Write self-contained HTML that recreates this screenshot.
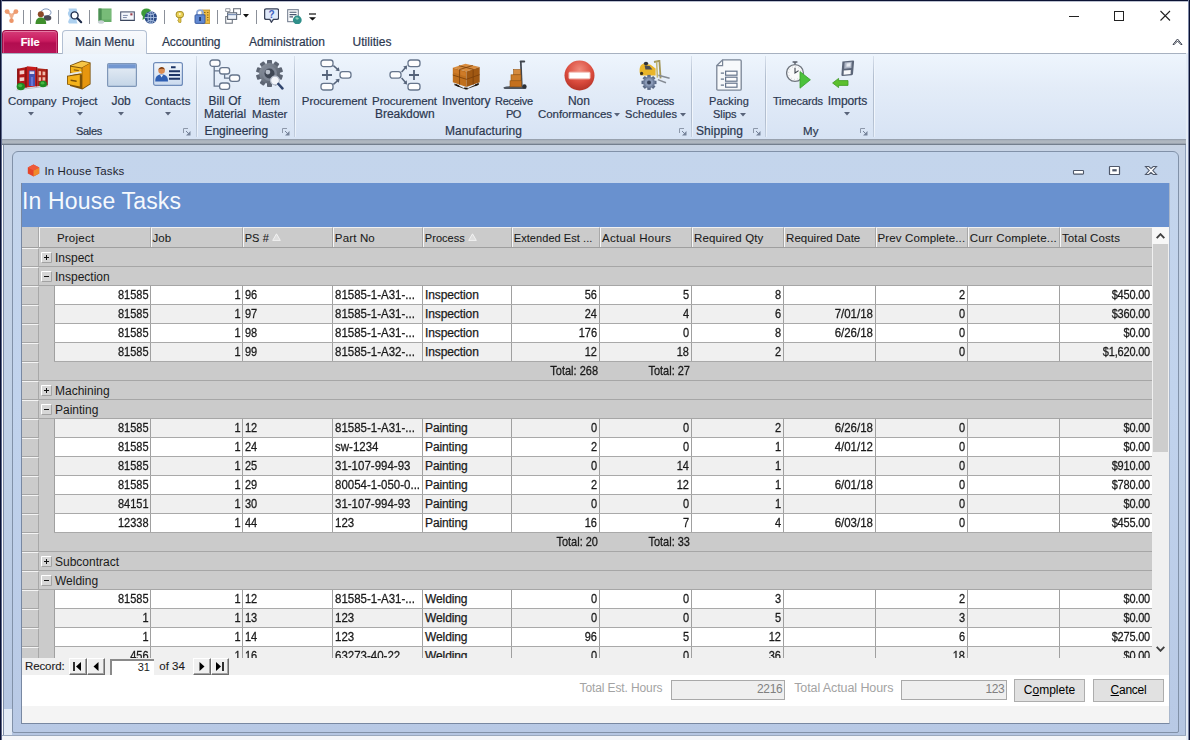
<!DOCTYPE html>
<html><head><meta charset="utf-8"><title>In House Tasks</title>
<style>
*{box-sizing:border-box;margin:0;padding:0}
html,body{width:1190px;height:740px;overflow:hidden;background:#fff}
body{font-family:"Liberation Sans",sans-serif;font-size:11px;color:#1a1a1a;position:relative}
.abs{position:absolute}
.t{position:absolute;white-space:nowrap;line-height:14px;height:14px;-webkit-text-stroke:0.2px}
/* frame */
#topline{left:0;top:0;width:1190px;height:2px;background:linear-gradient(#0b1233 0,#0b1233 1px,#8e96ad 1px,#e8ebf2 2px)}
#leftline{left:0;top:0;width:2px;height:740px;background:linear-gradient(90deg,#0b1233 0,#0b1233 1px,#4b5679 1px,#6f7a9b 2px)}
#rightline{left:1188px;top:0;width:2px;height:740px;background:linear-gradient(90deg,#7d88a6 0,#7d88a6 1px,#0b1233 1px,#0b1233 2px)}
#rightstrip{left:1186px;top:53px;width:2px;height:687px;background:#e6edf6}
#qat{left:2px;top:2px;width:1188px;height:28px;background:#fff}
#tabs{left:2px;top:30px;width:1188px;height:23px;background:#fff}
#ribbon{left:2px;top:53px;width:1184px;height:86px;background:linear-gradient(#eef5fd 0%,#e3ecf8 40%,#d7e3f4 100%);border-top:1px solid #a7b1c0}
#ribbot{left:2px;top:139px;width:1184px;height:6px;background:linear-gradient(#8f99a7 0%,#a9b1bb 25%,#b3bac3 55%,#98a1ad 78%,#5e6a7a 100%)}
#mdi{left:3px;top:145px;width:1183px;height:590px;background:linear-gradient(#c8d3e3 0,#c6d3e6 8px,#c0d1e7 300px,#b5c6e2 590px);border-left:1px solid #7f8ea8;border-right:1px solid #8fa0bb}
#mdibot{left:2px;top:735px;width:1188px;height:5px;background:#f4f6f9;border-top:1px solid #9aa8bd}
#child{left:12px;top:151px;width:1167px;height:582px;background:linear-gradient(#c4d5ec 0,#c1d3ed 250px,#b8c9e5 582px);border:1px solid #8191a8;border-radius:6px 6px 2px 2px}
#content{left:21px;top:183px;width:1149px;height:541px;background:#fff;border:1px solid #7888a2;border-top:none;border-right-color:#a9b7cc}
#lcorner{left:4px;top:709px;width:8px;height:26px;background:#e3ebf6}
#bluehdr{left:22px;top:183px;width:1147px;height:44px;background:#6991cf}
#bluehdr span{position:absolute;left:0px;top:4px;font-size:23px;line-height:28px;color:#f6f9fd;letter-spacing:0.17px}
.sep{position:absolute;top:56px;width:2px;height:81px;background:linear-gradient(90deg,#b3bfd0 0,#b3bfd0 1px,#f1f6fc 1px,#f1f6fc 2px);-webkit-mask-image:linear-gradient(rgba(0,0,0,.35),#000 25%,#000 80%,rgba(0,0,0,.6));mask-image:linear-gradient(rgba(0,0,0,.35),#000 25%,#000 80%,rgba(0,0,0,.6))}
.rl{color:#3a4760}
#filetab{left:2px;top:30px;width:56px;height:23px;border-radius:4px 4px 0 0;background:linear-gradient(#d63c78 0%,#c91b5f 45%,#b30d50 55%,#b81457 100%);border:1px solid #9c0d46;border-bottom:none;box-shadow:inset 0 1px 0 #e57aa3, inset 1px 0 0 #d4457c, inset -1px 0 0 #d4457c}
#maintab{left:62px;top:30px;width:85px;height:24px;border-radius:4px 4px 0 0;background:linear-gradient(#f7f9fc,#edf2f8);border:1px solid #b3c0d3;border-bottom:none}
.navb{position:absolute;top:658px;height:17px;background:#f0f0f0;border-top:1px solid #fff;border-left:1px solid #fff;border-right:1px solid #6e6e6e;border-bottom:1px solid #6e6e6e;box-shadow:inset -1px -1px 0 #a5a5a5}
.navb svg{position:absolute;left:0;top:0}
.fld{position:absolute;top:680px;height:19.5px;background:#efefef;border:1px solid #a9a9a9;text-align:right;padding-right:1.5px;line-height:17.5px;font-size:12px;letter-spacing:-0.3px;color:#808080}
.btn{position:absolute;top:679px;height:23px;background:#e1e1e1;border:1px solid #adadad;text-align:center;line-height:20px;font-size:12px;color:#000}
/* grid */
.grid{position:absolute;left:22px;top:227px;width:1130px;height:431px;background:#cbcbcb;overflow:hidden}
.hrow{position:absolute;left:0;top:0;width:1130px;height:21px;background:#cbcbcb;border-bottom:1px solid #9f9f9f}
.hsel{position:absolute;left:0;top:0;width:17px;height:21px;border-right:1px solid #a8a8a8}
.hc{position:absolute;top:0;height:20px;border-left:1px solid #a8a8a8;border-top:1px solid #f0f0f0;box-shadow:inset 1px 0 0 #f6f6f6}
.hc.first{border-left:none}
.grow,.trow,.drow{position:absolute;left:0;width:1130px;height:19px}
.grow,.trow{border-bottom:1px solid #a6a6a6}
.sel{position:absolute;left:0;top:0;width:17px;height:19px;background:#cbcbcb;border-top:1px solid #f4f4f4;border-right:1px solid #a8a8a8;border-bottom:1px solid #a6a6a6}
.pm{position:absolute;left:19px;top:4px}
.gl{position:absolute;left:33px;top:0.5px;line-height:18px;font-size:12px}
.tt{position:absolute;top:0;line-height:18px}
.cells{position:absolute;left:32px;top:0;width:1098px;height:19px;background:linear-gradient(#a0a0a0,#a0a0a0) 0px 0/1px 100% no-repeat,linear-gradient(#a0a0a0,#a0a0a0) 96px 0/1px 100% no-repeat,linear-gradient(#a0a0a0,#a0a0a0) 188px 0/1px 100% no-repeat,linear-gradient(#a0a0a0,#a0a0a0) 278px 0/1px 100% no-repeat,linear-gradient(#a0a0a0,#a0a0a0) 368px 0/1px 100% no-repeat,linear-gradient(#a0a0a0,#a0a0a0) 457px 0/1px 100% no-repeat,linear-gradient(#a0a0a0,#a0a0a0) 545px 0/1px 100% no-repeat,linear-gradient(#a0a0a0,#a0a0a0) 637px 0/1px 100% no-repeat,linear-gradient(#a0a0a0,#a0a0a0) 729px 0/1px 100% no-repeat,linear-gradient(#a0a0a0,#a0a0a0) 821px 0/1px 100% no-repeat,linear-gradient(#a0a0a0,#a0a0a0) 913px 0/1px 100% no-repeat,linear-gradient(#a0a0a0,#a0a0a0) 1005px 0/1px 100% no-repeat;background-color:#fff;border-bottom:1px solid #a9a9a9}
.alt .cells{background-color:#f0f0f0}
.c{position:absolute;top:0;height:18px;line-height:18px;padding:0 2px 0 3px;white-space:nowrap;overflow:hidden;transform-origin:0 12.6px;-webkit-text-stroke:0.25px #1a1a1a}
.c.r{text-align:right}
.tt{transform:scaleY(1.1);transform-origin:0 12.6px;-webkit-text-stroke:0.25px #1a1a1a}
</style></head><body>
<div class="abs" id="qat"></div>
<div class="abs" id="tabs"></div>
<div class="abs" id="ribbon"></div>
<div class="abs" id="ribbot"></div>
<div class="abs" id="mdi"></div>
<div class="abs" id="mdibot"></div>
<div class="abs" id="lcorner"></div>
<div class="abs" id="child"></div>
<div class="abs" id="content"></div>
<div class="abs" id="bluehdr"><span>In House Tasks</span></div>
<svg class="abs" style="left:3.5px;top:8px" width="15" height="16" viewBox="0 0 16 16"><path d="M3.5 3.5 L8 7.5 L12.5 3.5 M8 7.5 V12.5" stroke="#e9a37e" stroke-width="2" fill="none"/><circle cx="3.3" cy="3.3" r="2.6" fill="#ee9a6e"/><circle cx="12.7" cy="3.3" r="2.6" fill="#ee9a6e"/><circle cx="8" cy="7.6" r="2.3" fill="#f2b08c"/><circle cx="8" cy="13" r="2.4" fill="#ec9468"/></svg>
<div class="abs" style="left:23px;top:9.5px;width:1px;height:14px;background:#8b9099"></div>
<div class="abs" style="left:30px;top:9.5px;width:1px;height:14px;background:#8b9099"></div>
<svg class="abs" style="left:35px;top:8px" width="17" height="16" viewBox="0 0 17 16"><ellipse cx="11" cy="4.5" rx="5" ry="3.6" fill="#fff" stroke="#7e97bd" stroke-width="1"/><ellipse cx="12.5" cy="10" rx="3.8" ry="2.8" fill="#4a4a55"/><circle cx="5.8" cy="6.2" r="3" fill="#8c4a28"/><path d="M0.5 16 C0.5 11 3 9.5 5.8 9.5 C8.8 9.5 11.2 11 11.2 16 Z" fill="#3f8f2c"/></svg>
<div class="abs" style="left:58px;top:9.5px;width:1px;height:14px;background:#8b9099"></div>
<svg class="abs" style="left:67px;top:8px" width="15.5" height="16" viewBox="0 0 15.5 16"><path d="M1.5 0.5 H9.5 Q11 2.5 9 4.5 Q7.5 6.5 10 8.5 Q11.5 10.5 9.5 12.5 L10.5 15.5 H2 Q0.5 13.5 2 11.5 Q3.5 9.5 1.5 7.5 Q0 5 2 3 Z" fill="#a9cdee" opacity="0.95"/><circle cx="7.6" cy="7.4" r="3.5" fill="#fdfeff" stroke="#1d2b4a" stroke-width="1.4"/><path d="M10.4 10.2 L14.2 14.2" stroke="#1d2b4a" stroke-width="2.1" stroke-linecap="round"/></svg>
<div class="abs" style="left:89px;top:9.5px;width:1px;height:14px;background:#8b9099"></div>
<svg class="abs" style="left:97px;top:8px" width="16" height="16" viewBox="0 0 16 16"><rect x="1.5" y="0.5" width="13" height="13.5" fill="#66ad68"/><rect x="1.5" y="0.5" width="3" height="13.5" fill="#4d8f55"/><rect x="5" y="1.5" width="9" height="10" fill="#78bb78"/><ellipse cx="4" cy="14" rx="3.2" ry="1.8" fill="#c9d2d6"/></svg>
<svg class="abs" style="left:120px;top:8px" width="15" height="16" viewBox="0 0 15.4 16"><rect x="0.7" y="3.8" width="14" height="8.6" fill="#f4f7fc" stroke="#4a5470" stroke-width="1.1"/><path d="M0.3 12.6 H15.1" stroke="#39435a" stroke-width="1"/><rect x="10.6" y="5.2" width="2.2" height="2.2" fill="#9a3d4a"/><path d="M3 7.4 H8 M3 9.6 H7" stroke="#7a88a8" stroke-width="1"/></svg>
<svg class="abs" style="left:140.5px;top:7.5px" width="16.5" height="16.5" viewBox="0 0 16.5 16.5"><ellipse cx="5.5" cy="5" rx="5.3" ry="4.6" fill="#3d9a3a"/><path d="M2 8 L1.5 12 L6 9 Z" fill="#3d9a3a"/><circle cx="9.8" cy="9.5" r="6.2" fill="#2b4a86"/><path d="M9.8 3.3 V15.7 M3.6 9.5 H16 M5.5 5.2 C8 7 11.6 7 14.2 5.2 M5.5 13.8 C8 12 11.6 12 14.2 13.8" stroke="#a9bfe2" stroke-width="0.9" fill="none"/><ellipse cx="9.8" cy="9.5" rx="2.8" ry="6.2" fill="none" stroke="#a9bfe2" stroke-width="0.9"/></svg>
<div class="abs" style="left:164px;top:9.5px;width:1px;height:14px;background:#8b9099"></div>
<svg class="abs" style="left:174.5px;top:10.5px" width="9.6" height="12.6" viewBox="0 0 9.6 12.6"><rect x="1.2" y="0.6" width="7.2" height="6" rx="2.4" fill="#ecd35a" stroke="#a28a1e" stroke-width="1"/><circle cx="4.8" cy="3" r="1" fill="#fffbe0"/><path d="M3.6 6.4 H6 V11.2 L4.8 12.2 L3.6 11.2 V10 L2.6 9.4 L3.6 8.8 Z" fill="#e6c84a" stroke="#a28a1e" stroke-width="0.7"/></svg>
<svg class="abs" style="left:193.5px;top:7.5px" width="16.5" height="16" viewBox="0 0 16.5 16"><rect x="8" y="2" width="8" height="13.5" fill="#edbb45" stroke="#b98a22" stroke-width="0.8"/><path d="M10 4.5 H11.5 M13 4.5 H14.5 M10 7 H11.5 M13 7 H14.5 M13 9.5 H14.5 M13 12 H14.5" stroke="#8d6a18" stroke-width="1.2"/><path d="M3 7 V4.5 C3 1.2 9 1.2 9 4.5 V7" fill="none" stroke="#8fa9d8" stroke-width="1.8"/><rect x="1" y="6.8" width="10" height="8.6" rx="1" fill="#6189d2" stroke="#36579c" stroke-width="0.9"/><rect x="5.2" y="9" width="1.7" height="4" fill="#1f3566"/></svg>
<div class="abs" style="left:217px;top:9.5px;width:1px;height:14px;background:#8b9099"></div>
<svg class="abs" style="left:225px;top:8px" width="16" height="16" viewBox="0 0 16 16"><rect x="8.6" y="0.7" width="7" height="5.8" fill="#fff" stroke="#707782" stroke-width="1.1"/><rect x="0.7" y="8.6" width="6.6" height="6.6" fill="#fff" stroke="#707782" stroke-width="1.1"/><rect x="2.6" y="4.8" width="9" height="6.6" fill="#eef3fa" stroke="#5f6876" stroke-width="1.1"/><path d="M2.6 6.6 H11.6" stroke="#7d93b8" stroke-width="1.2"/><path d="M0.7 3.5 H5 V0.7 H0.7 Z" fill="#fff" stroke="#8a909a" stroke-width="0.9"/></svg>
<svg class="abs" style="left:243px;top:14px" width="6" height="4" viewBox="0 0 6 4"><path d="M0 0 H6 L3 3.6 Z" fill="#111"/></svg>
<div class="abs" style="left:256px;top:9.5px;width:1px;height:14px;background:#8b9099"></div>
<svg class="abs" style="left:264px;top:8px" width="15" height="15" viewBox="0 0 15 15"><path d="M2.2 0.8 H13 Q14.6 0.8 14.6 2.4 V9.8 Q14.6 11.4 13 11.4 H9.4 L7.4 14.2 L5.8 11.4 H2.2 Q0.6 11.4 0.6 9.8 V2.4 Q0.6 0.8 2.2 0.8 Z" fill="#dfe9fa" stroke="#3a4258" stroke-width="1.3"/><text x="7.6" y="9.6" font-family="Liberation Sans,sans-serif" font-size="10" font-weight="bold" fill="#3d5fc0" text-anchor="middle">?</text></svg>
<svg class="abs" style="left:287px;top:8.5px" width="15" height="15.5" viewBox="0 0 15 15.5"><rect x="0.7" y="0.7" width="10.6" height="12" fill="#fbfcfd" stroke="#6a7688" stroke-width="1"/><path d="M2.5 3.3 H9.5 M2.5 5.6 H9.5 M2.5 7.9 H6" stroke="#47566e" stroke-width="1.1"/><circle cx="10.3" cy="11" r="4.4" fill="#2f8f8a"/><path d="M8 9 Q10 7.5 12 9.5 Q11 11 9.5 10.5 Z" fill="#8fd0b8"/></svg>
<svg class="abs" style="left:307.5px;top:12.5px" width="9" height="9" viewBox="0 0 9 9"><path d="M1 1 H8" stroke="#111" stroke-width="1.2"/><path d="M1 4.2 H8 L4.5 7.6 Z" fill="#111"/></svg>
<svg class="abs" style="left:1060px;top:4px" width="120" height="24" viewBox="0 0 120 24"><path d="M9 12.5 H19" stroke="#222" stroke-width="1"/><rect x="54.5" y="7.5" width="9" height="9" fill="none" stroke="#222" stroke-width="1"/><path d="M100.5 7 L110 16.5 M110 7 L100.5 16.5" stroke="#222" stroke-width="1.1"/></svg>
<div class="abs" id="filetab"></div><div class="abs" id="maintab"></div>
<div class="t" style="left:20.7px;top:34.8px;font-size:11px;color:#fff;font-weight:bold;letter-spacing:-0.04px;">File</div>
<div class="t" style="left:75.0px;top:34.9px;font-size:12px;color:#2c3850;">Main Menu</div>
<div class="t" style="left:161.9px;top:34.9px;font-size:12px;color:#2c3850;letter-spacing:-0.08px;">Accounting</div>
<div class="t" style="left:248.9px;top:34.9px;font-size:12px;color:#2c3850;">Administration</div>
<div class="t" style="left:352.5px;top:34.9px;font-size:12px;color:#2c3850;letter-spacing:0.04px;">Utilities</div>
<svg class="abs" style="left:1172px;top:37px" width="11" height="9" viewBox="0 0 11 9"><path d="M1 7.5 L5.5 2 L10 7.5 Q8.5 8 7.5 6.2 L5.5 4 L3.5 6.2 Q2.5 8 1 7.5 Z" fill="#fff" stroke="#3c4250" stroke-width="1"/></svg>
<div class="t" style="left:8.0px;top:93.5px;font-size:11.5px;color:#2c3850;letter-spacing:-0.1px;">Company</div>
<div class="t" style="left:62.0px;top:93.5px;font-size:11.5px;color:#2c3850;letter-spacing:-0.04px;">Project</div>
<div class="t" style="left:111.5px;top:93.5px;font-size:12px;color:#2c3850;letter-spacing:-0.12px;">Job</div>
<div class="t" style="left:145.0px;top:93.5px;font-size:11.5px;color:#2c3850;">Contacts</div>
<div class="t" style="left:208.5px;top:93.5px;font-size:12px;color:#2c3850;letter-spacing:0.06px;">Bill Of</div>
<div class="t" style="left:204.0px;top:106.5px;font-size:12px;color:#2c3850;letter-spacing:-0.09px;">Material</div>
<div class="t" style="left:258.2px;top:93.5px;font-size:11px;color:#2c3850;letter-spacing:0.1px;">Item</div>
<div class="t" style="left:252.0px;top:106.5px;font-size:11.5px;color:#2c3850;letter-spacing:0.06px;">Master</div>
<div class="t" style="left:301.8px;top:93.5px;font-size:11.5px;color:#2c3850;letter-spacing:-0.06px;">Procurement</div>
<div class="t" style="left:372.1px;top:93.5px;font-size:11.5px;color:#2c3850;letter-spacing:-0.09px;">Procurement</div>
<div class="t" style="left:375.1px;top:106.5px;font-size:12px;color:#2c3850;letter-spacing:-0.07px;">Breakdown</div>
<div class="t" style="left:441.9px;top:93.5px;font-size:12px;color:#2c3850;letter-spacing:-0.09px;">Inventory</div>
<div class="t" style="left:495.1px;top:93.5px;font-size:11px;color:#2c3850;letter-spacing:-0.29px;">Receive</div>
<div class="t" style="left:506.0px;top:106.5px;font-size:11px;color:#2c3850;letter-spacing:-0.7px;">PO</div>
<div class="t" style="left:567.9px;top:93.5px;font-size:12px;color:#2c3850;letter-spacing:0.06px;">Non</div>
<div class="t" style="left:538.0px;top:106.5px;font-size:11.5px;color:#2c3850;letter-spacing:-0.07px;">Conformances</div>
<div class="t" style="left:636.2px;top:93.5px;font-size:11px;color:#2c3850;letter-spacing:-0.28px;">Process</div>
<div class="t" style="left:625.0px;top:106.5px;font-size:11px;color:#2c3850;letter-spacing:0.07px;">Schedules</div>
<div class="t" style="left:709.0px;top:93.5px;font-size:11px;color:#2c3850;letter-spacing:0.12px;">Packing</div>
<div class="t" style="left:713.0px;top:106.5px;font-size:11px;color:#2c3850;letter-spacing:-0.07px;">Slips</div>
<div class="t" style="left:772.9px;top:93.5px;font-size:11px;color:#2c3850;letter-spacing:-0.09px;">Timecards</div>
<div class="t" style="left:827.8px;top:93.5px;font-size:12px;color:#2c3850;letter-spacing:-0.1px;">Imports</div>
<div class="t" style="left:76.0px;top:123.5px;font-size:11px;color:#2c3850;letter-spacing:-0.31px;">Sales</div>
<div class="t" style="left:204.5px;top:123.5px;font-size:12px;color:#2c3850;letter-spacing:-0.04px;">Engineering</div>
<div class="t" style="left:445.0px;top:123.5px;font-size:12px;color:#2c3850;letter-spacing:0.07px;">Manufacturing</div>
<div class="t" style="left:696.0px;top:123.5px;font-size:12px;color:#2c3850;letter-spacing:0.04px;">Shipping</div>
<div class="t" style="left:803.1px;top:123.5px;font-size:11.5px;color:#2c3850;letter-spacing:0.03px;">My</div>
<div class="sep" style="left:195.5px"></div>
<div class="sep" style="left:293.5px"></div>
<div class="sep" style="left:690.5px"></div>
<div class="sep" style="left:764.5px"></div>
<div class="sep" style="left:872.5px"></div>
<svg class="abs" style="left:16px;top:65.5px" width="32.5" height="25" viewBox="0 0 32 25"><path d="M0.3 23.5 L31.5 19.5 V20.6 L0.3 24.6 Z" fill="#b9bcc0"/>
<path d="M1 2.8 L10.5 1 V21.5 L1 22.6 Z" fill="#b41616"/><path d="M10.5 0.2 L21 1.2 V20.3 L10.5 21.5 Z" fill="#c81c1c"/><path d="M21 2.2 L31.3 3.2 V19.2 L21 20.3 Z" fill="#ac2418"/>
<path d="M1 2.8 L2.2 2.6 V22.4 L1 22.6 Z M9.2 1.2 L10.5 1 V21.5 L9.2 21.7 Z M20 1.1 L21 1.2 V20.3 L20 20.4 Z M30.2 3.1 L31.3 3.2 V19.2 L30.2 19.3 Z" fill="#7e0e0e"/>
<path d="M3.4 4.8 L8 4.2 V8 L3.4 8.5 Z M3.4 11.5 L8 11.2 V14.8 L3.4 15.2 Z" fill="#f1cfcb"/>
<path d="M12.6 4.5 H18.8 V20 H12.6 Z" fill="#4452b0"/><path d="M13.4 5.4 H18 V8 H13.4 Z" fill="#ded8ee"/><path d="M14.6 11 H16.9 V20 H14.6 Z" fill="#6876d6"/>
<path d="M22.4 5 L24.8 5.2 V9.2 L22.4 9.2 Z M26.3 5.4 L29 5.7 V9.2 H26.3 Z M22.4 11.2 H24.8 V14.8 L22.4 15 Z M26.3 11.2 H29 V14.5 L26.3 14.7 Z" fill="#efb9a8"/>
<ellipse cx="4.6" cy="20.5" rx="4.2" ry="3.7" fill="#1f8a22"/><ellipse cx="4" cy="19.6" rx="2.1" ry="1.6" fill="#46b843"/>
<ellipse cx="26.8" cy="18" rx="3.8" ry="3.2" fill="#1f8a22"/><ellipse cx="26.3" cy="17.2" rx="1.8" ry="1.4" fill="#46b843"/></svg>
<svg class="abs" style="left:66px;top:60px" width="26" height="30" viewBox="0 0 26 30"><path d="M4 5.2 L16 0.6 L24.6 2.4 V24.2 L16.4 29.6 L4 26 Z" fill="#7e5209"/>
<path d="M4.8 5.8 L16 1.5 L23.8 3 L15.8 7.4 Z" fill="#f7c545"/>
<path d="M16.4 7.8 L23.8 3.6 V23.8 L16.4 28.6 Z" fill="#e7960f"/>
<path d="M4.8 6.8 L15.6 8.6 V14.4 L4.8 12.4 Z" fill="#f5b51d"/>
<path d="M7.8 9.2 L12.8 10.1 V11.3 L7.8 10.4 Z" fill="#8a5a08"/>
<path d="M2.6 13.4 L15 11.2 L15.8 13 L3.6 15.4 Z" fill="#e4e6e4"/>
<path d="M1 15.8 L14.6 13.6 V27.6 L1 24.6 Z" fill="#7e5209"/>
<path d="M1.8 16.6 L13.8 14.8 V26.6 L1.8 23.9 Z" fill="#f4b21a"/>
<path d="M4.6 19.6 L10.6 20.6 V22 L4.6 21 Z" fill="#7a4f06"/></svg>
<svg class="abs" style="left:107px;top:63px" width="30" height="24" viewBox="0 0 30 24"><defs><linearGradient id="jb" x1="0" y1="0" x2="0" y2="1"><stop offset="0" stop-color="#e7eef6"/><stop offset="1" stop-color="#c4d5e7"/></linearGradient></defs>
<rect x="0.6" y="0.6" width="28.8" height="22.8" rx="1.2" fill="url(#jb)" stroke="#7f97b8" stroke-width="1.2"/><rect x="1.2" y="1.2" width="27.6" height="4.2" fill="#7397d0"/></svg>
<svg class="abs" style="left:153px;top:62px" width="30" height="24" viewBox="0 0 30 24"><defs><linearGradient id="ct" x1="0" y1="0" x2="0" y2="1"><stop offset="0" stop-color="#f3f7fc"/><stop offset="1" stop-color="#c9d9ee"/></linearGradient></defs>
<rect x="0.6" y="0.6" width="28.8" height="22.8" rx="2" fill="url(#ct)" stroke="#6f8cba" stroke-width="1.2"/>
<circle cx="8.6" cy="8.6" r="3.3" fill="#d98b52"/><path d="M5.2 7.6 Q8.6 2.6 12 7.4 Q9 5.8 5.2 7.6 Z" fill="#7a3d12"/>
<path d="M2.2 19.4 C2.2 14.2 5 12.6 8.6 12.6 C12.2 12.6 15 14.2 15 19.4 Z" fill="#2f5fb3"/><path d="M7 12.8 L8.6 15.6 L10.2 12.8 Z" fill="#e8eef8"/>
<path d="M18 5.2 H22.6 M16 9.2 H27 M16 13 H27 M16 16.8 H27" stroke="#1d3566" stroke-width="2"/></svg>
<svg class="abs" style="left:208.5px;top:59px" width="32" height="32" viewBox="0 0 32 32"><g fill="#fdfdfe" stroke="#66758c" stroke-width="1.3"><rect x="1" y="1" width="10" height="6.4" rx="2.6"/><rect x="10.6" y="8.6" width="10" height="6.4" rx="2.6"/><rect x="20.6" y="16" width="10" height="6.4" rx="2.6"/><rect x="10.6" y="24" width="10" height="6.4" rx="2.6"/></g>
<path d="M5.2 7.6 V27.2 H10.4 M5.2 11.8 H10.4 M15.6 15.2 V19.2 H20.4" fill="none" stroke="#66758c" stroke-width="1.3"/></svg>
<svg class="abs" style="left:256px;top:60px" width="28" height="30" viewBox="0 0 28 30"><defs><linearGradient id="gg" x1="0" y1="0" x2="1" y2="1"><stop offset="0" stop-color="#8f97a3"/><stop offset="1" stop-color="#4d5562"/></linearGradient></defs><g transform="translate(13.5,13.5)"><g fill="#5d6573">
<rect x="-2.5" y="-13.5" width="5" height="27" rx="0.8"/><rect x="-2.5" y="-13.5" width="5" height="27" rx="0.8" transform="rotate(36)"/><rect x="-2.5" y="-13.5" width="5" height="27" rx="0.8" transform="rotate(72)"/><rect x="-2.5" y="-13.5" width="5" height="27" rx="0.8" transform="rotate(108)"/><rect x="-2.5" y="-13.5" width="5" height="27" rx="0.8" transform="rotate(144)"/></g>
<circle r="10.4" fill="url(#gg)"/><circle r="7.4" fill="#7d8593"/><circle r="5" fill="#3f4754"/><circle cx="-1.6" cy="-1.4" r="2.4" fill="#b9c0cb"/></g>
<circle cx="19" cy="20.5" r="4.4" fill="#f4f6fa" stroke="#b3bbc8" stroke-width="1.2"/><path d="M22.4 24 L26.4 28.4" stroke="#31456e" stroke-width="2.6" stroke-linecap="round"/></svg>
<svg class="abs" style="left:319.5px;top:59px" width="32" height="32" viewBox="0 0 32 32"><g fill="#fdfdfe" stroke="#66758c" stroke-width="1.3"><rect x="1" y="1" width="12" height="6.6" rx="2.6"/><rect x="1" y="24.4" width="12" height="6.6" rx="2.6"/><rect x="20" y="12.6" width="11" height="6.6" rx="2.6"/></g>
<path d="M7 11 V21 M2 16 H12" stroke="#55637a" stroke-width="1.8"/>
<path d="M13.4 6.6 L18.4 11" stroke="#55637a" stroke-width="1.5"/><path d="M19.6 12.2 L15.4 11.6 L18.8 8.2 Z" fill="#55637a"/>
<path d="M13.4 25.4 L18.4 21" stroke="#55637a" stroke-width="1.5"/><path d="M19.6 19.8 L15.4 20.4 L18.8 23.8 Z" fill="#55637a"/></svg>
<svg class="abs" style="left:388.5px;top:59px" width="32" height="32" viewBox="0 0 32 32"><g fill="#fdfdfe" stroke="#66758c" stroke-width="1.3"><rect x="19" y="1" width="12" height="6.6" rx="2.6"/><rect x="19" y="24.4" width="12" height="6.6" rx="2.6"/><rect x="1" y="12.6" width="11" height="6.6" rx="2.6"/></g>
<path d="M25 11 V21 M20 16 H30" stroke="#55637a" stroke-width="1.8"/>
<path d="M12.6 13 L16.6 8.4" stroke="#55637a" stroke-width="1.5"/><path d="M18 6.6 L17.8 10.8 L14.2 7.6 Z" fill="#55637a"/>
<path d="M12.6 19 L16.6 23.6" stroke="#55637a" stroke-width="1.5"/><path d="M18 25.4 L17.8 21.2 L14.2 24.4 Z" fill="#55637a"/></svg>
<svg class="abs" style="left:451.5px;top:62px" width="28.5" height="27.5" viewBox="0 0 28 27"><path d="M2.4 21 L13.6 26.8 L26.4 20.6 V22.4 L13.6 27 L2.4 22.8 Z" fill="#2e2216"/><path d="M4 21.6 L7 23 V24.6 L4 23.4 Z M12 25 L15.4 25.2 V27 L12 26.6 Z M22.6 22 L25.6 20.8 V22.6 L22.6 23.8 Z" fill="#1e160e"/>
<path d="M0.8 5.6 L13.2 1.6 L27.2 5 L14.2 9.4 Z" fill="#d88c3e"/>
<path d="M0.8 5.6 L14.2 9.4 V24.6 L0.8 20 Z" fill="#c0701e"/>
<path d="M14.2 9.4 L27.2 5 V19.8 L14.2 24.6 Z" fill="#a05812"/>
<path d="M7.4 7.4 V22.4 M0.8 12.8 L14.2 17 L27.2 12.4 M20.8 7.2 V22.2 M6.8 3.6 L20.8 7.2 M20.4 3.4 L7.4 7.4" stroke="#7a3f0a" stroke-width="0.8" fill="none"/>
<path d="M1.4 6.6 L6.8 8.2 V12 L1.4 10.4 Z M8.2 8.6 L13.6 10.2 V14.2 L8.2 12.6 Z" fill="#d8822e" opacity="0.6"/></svg>
<svg class="abs" style="left:502.5px;top:60px" width="24" height="30" viewBox="0 0 24 30"><path d="M17.8 1.4 L18.8 26.6" stroke="#41464e" stroke-width="1.7"/><path d="M17.6 1.4 H21.2" stroke="#41464e" stroke-width="2" stroke-linecap="round"/>
<path d="M0.6 27.2 Q6 25.4 20 26.6 L23.4 27.6 Q23.6 29.4 21 29 H2.4 Q0.2 28.8 0.6 27.2 Z" fill="#4f5660"/>
<circle cx="21.4" cy="26.4" r="2.2" fill="#2c3036"/>
<rect x="10.6" y="9.6" width="7" height="5.2" fill="#d48a3e" stroke="#95540f" stroke-width="0.6"/>
<rect x="8" y="14.8" width="10" height="6" fill="#cc7c2a" stroke="#95540f" stroke-width="0.6"/>
<rect x="7" y="20.8" width="11.4" height="6" fill="#c4701e" stroke="#95540f" stroke-width="0.6"/></svg>
<svg class="abs" style="left:563.5px;top:59.5px" width="31" height="31" viewBox="0 0 31 31"><defs><radialGradient id="nc" cx="0.5" cy="0.3" r="0.8"><stop offset="0" stop-color="#f08a7c"/><stop offset="0.55" stop-color="#d94a3c"/><stop offset="1" stop-color="#a62a20"/></radialGradient></defs>
<circle cx="15.5" cy="15.5" r="15" fill="url(#nc)"/><rect x="5" y="12.2" width="21" height="6.6" rx="0.8" fill="#fff" stroke="#f3c2bc" stroke-width="1"/></svg>
<svg class="abs" style="left:639px;top:60px" width="31" height="30" viewBox="0 0 31 30"><path d="M15 2 L20.4 0.8 L21.6 18.4" stroke="#a3975a" stroke-width="1.8" fill="none"/><path d="M17.6 1.6 L18.4 17.6" stroke="#c2b56e" stroke-width="1.5"/>
<path d="M0.6 9 Q1 4.6 5 3.6 L11.6 4.8 L16.6 8.6 V15.4 H1.4 Q0.2 12 0.6 9 Z" fill="#e9b52a"/><path d="M5.6 5.4 L10.6 6 L13.4 9.4 H6.4 Z" fill="#4a4d55"/><ellipse cx="7" cy="3.6" rx="2.2" ry="1.8" fill="#2f3238"/><circle cx="2.6" cy="13.4" r="1.6" fill="#3a3320"/>
<path d="M19.4 15.2 L30.6 18.2 M18.8 19.6 L27 22.8" stroke="#858b94" stroke-width="1.5"/>
<g transform="translate(10,22.4)"><g fill="#596985"><rect x="-1.7" y="-7.5" width="3.4" height="15"/><rect x="-1.7" y="-7.5" width="3.4" height="15" transform="rotate(45)"/><rect x="-1.7" y="-7.5" width="3.4" height="15" transform="rotate(90)"/><rect x="-1.7" y="-7.5" width="3.4" height="15" transform="rotate(135)"/></g><circle r="5.9" fill="#6f7f9c"/><circle r="4.2" fill="#8999b6"/><circle r="2" fill="#36425a"/></g></svg>
<svg class="abs" style="left:716px;top:59px" width="26" height="32" viewBox="0 0 26 32"><path d="M6.6 0.8 H24 Q25.2 0.8 25.2 2 V30 Q25.2 31.2 24 31.2 H2 Q0.8 31.2 0.8 30 V6.6 Z" fill="#f7f9fb" stroke="#7a8596" stroke-width="1.3"/><path d="M6.6 0.8 V6.6 H0.8" fill="none" stroke="#7a8596" stroke-width="1.2"/>
<g fill="#fdfdfe" stroke="#66758c" stroke-width="1.2"><rect x="9.6" y="12.2" width="11.4" height="4"/><rect x="9.6" y="18.2" width="11.4" height="4"/><rect x="9.6" y="24.2" width="11.4" height="4"/></g>
<path d="M4.8 14.2 H8 M4.8 20.2 H8 M4.8 26.2 H8" stroke="#66758c" stroke-width="1.2"/></svg>
<svg class="abs" style="left:785.5px;top:61px" width="25" height="28" viewBox="0 0 25 28"><path d="M6.6 1 H11.4 M9 1 V3.4" stroke="#555b66" stroke-width="1.4"/><circle cx="9" cy="12" r="8.4" fill="#f8f9fa" stroke="#70767f" stroke-width="1.3"/><circle cx="9" cy="12" r="6.4" fill="none" stroke="#b9bec6" stroke-width="0.8" stroke-dasharray="0.9 2.4"/><path d="M9 6.8 V12 L12.6 9.6" stroke="#3c424c" stroke-width="1.1" fill="none"/>
<path d="M14 10.6 L24.4 18.8 L14 27.2 Z" fill="#4cc23c" stroke="#3aa02c" stroke-width="0.8"/></svg>
<svg class="abs" style="left:832px;top:60px" width="23" height="28" viewBox="0 0 23 28"><path d="M10.4 1.6 L21 0.4 Q22.2 0.3 22.1 1.5 L21 14 Q20.9 15.1 19.7 15.2 L10.6 16 Q9.3 16.1 9.4 14.8 Z" fill="#5c6679"/><path d="M12.6 2.6 L19.8 1.8 L19.4 8 L12.2 8.8 Z" fill="#aeb6c6"/><path d="M14.6 3.4 L18.6 3 L18.4 6.4 L14.4 6.8 Z" fill="#e6eaf1"/><path d="M11.8 10.6 L18.8 9.9 L18.6 14 L11.6 14.7 Z" fill="#f8f9fb"/>
<path d="M0.6 23 L6.6 18.4 V20.6 H16 V25.4 H6.6 V27.6 Z" fill="#5cc02e" stroke="#3f9a22" stroke-width="0.8" stroke-linejoin="round"/></svg>
<svg class="abs" style="left:28px;top:112px" width="6" height="4" viewBox="0 0 6 4"><path d="M0 0 H6 L3 3.4 Z" fill="#59647a"/></svg>
<svg class="abs" style="left:76.5px;top:112px" width="6" height="4" viewBox="0 0 6 4"><path d="M0 0 H6 L3 3.4 Z" fill="#59647a"/></svg>
<svg class="abs" style="left:118px;top:112px" width="6" height="4" viewBox="0 0 6 4"><path d="M0 0 H6 L3 3.4 Z" fill="#59647a"/></svg>
<svg class="abs" style="left:164.5px;top:112px" width="6" height="4" viewBox="0 0 6 4"><path d="M0 0 H6 L3 3.4 Z" fill="#59647a"/></svg>
<svg class="abs" style="left:614px;top:113px" width="6" height="4" viewBox="0 0 6 4"><path d="M0 0 H6 L3 3.4 Z" fill="#59647a"/></svg>
<svg class="abs" style="left:680px;top:113px" width="6" height="4" viewBox="0 0 6 4"><path d="M0 0 H6 L3 3.4 Z" fill="#59647a"/></svg>
<svg class="abs" style="left:740px;top:113px" width="6" height="4" viewBox="0 0 6 4"><path d="M0 0 H6 L3 3.4 Z" fill="#59647a"/></svg>
<svg class="abs" style="left:844px;top:112px" width="6" height="4" viewBox="0 0 6 4"><path d="M0 0 H6 L3 3.4 Z" fill="#59647a"/></svg>
<svg class="abs" style="left:183px;top:128px" width="8" height="8" viewBox="0 0 8 8"><path d="M0.5 5 V0.5 H5" fill="none" stroke="#8d98aa" stroke-width="1"/><path d="M7.5 3 V7.5 H3 Z" fill="#76839a"/><path d="M3 3 L6 6" stroke="#76839a" stroke-width="1"/></svg>
<svg class="abs" style="left:282px;top:128px" width="8" height="8" viewBox="0 0 8 8"><path d="M0.5 5 V0.5 H5" fill="none" stroke="#8d98aa" stroke-width="1"/><path d="M7.5 3 V7.5 H3 Z" fill="#76839a"/><path d="M3 3 L6 6" stroke="#76839a" stroke-width="1"/></svg>
<svg class="abs" style="left:678.5px;top:128px" width="8" height="8" viewBox="0 0 8 8"><path d="M0.5 5 V0.5 H5" fill="none" stroke="#8d98aa" stroke-width="1"/><path d="M7.5 3 V7.5 H3 Z" fill="#76839a"/><path d="M3 3 L6 6" stroke="#76839a" stroke-width="1"/></svg>
<svg class="abs" style="left:752.5px;top:128px" width="8" height="8" viewBox="0 0 8 8"><path d="M0.5 5 V0.5 H5" fill="none" stroke="#8d98aa" stroke-width="1"/><path d="M7.5 3 V7.5 H3 Z" fill="#76839a"/><path d="M3 3 L6 6" stroke="#76839a" stroke-width="1"/></svg>
<svg class="abs" style="left:860px;top:128px" width="8" height="8" viewBox="0 0 8 8"><path d="M0.5 5 V0.5 H5" fill="none" stroke="#8d98aa" stroke-width="1"/><path d="M7.5 3 V7.5 H3 Z" fill="#76839a"/><path d="M3 3 L6 6" stroke="#76839a" stroke-width="1"/></svg>
<div class="t" style="left:44.5px;top:163.5px;font-size:11.5px;color:#1e2430;-webkit-text-stroke:0;letter-spacing:0.11px;">In House Tasks</div>
<svg class="abs" style="left:27px;top:164px" width="13" height="13" viewBox="0 0 13 13"><path d="M6.5 0.4 L12.2 3.4 V9.6 L6.5 12.6 L0.8 9.6 V3.4 Z" fill="#e5452a"/><path d="M6.5 6.4 L12.2 3.4 V9.6 L6.5 12.6 Z" fill="#f08a2a"/><path d="M6.5 0.4 L12.2 3.4 L6.5 6.4 L0.8 3.4 Z" fill="#ee5a3a"/></svg>
<svg class="abs" style="left:1070px;top:164px" width="92" height="14" viewBox="0 0 92 14"><rect x="3.5" y="6.5" width="10" height="3.6" rx="0.6" fill="#fff" stroke="#4f586a" stroke-width="1.1"/><rect x="39.5" y="2.5" width="10" height="8" rx="0.6" fill="#fff" stroke="#4f586a" stroke-width="1.2"/><rect x="42.3" y="5.2" width="4.4" height="2.2" fill="#4f586a"/><path d="M75.5 2.5 H78.8 L81 4.6 L83.2 2.5 H86.5 L82.8 6.5 L86.5 10.5 H83.2 L81 8.4 L78.8 10.5 H75.5 L79.2 6.5 Z" fill="#fff" stroke="#4f586a" stroke-width="1.1"/></svg>
<div class="grid">
<div class="hrow">
<div class="hsel"></div>
<div class="hc first" style="left:17px;width:111px;"></div>
<div class="hc" style="left:128px;width:92px;"></div>
<div class="hc" style="left:220px;width:90px;"></div>
<div class="hc" style="left:310px;width:90px;"></div>
<div class="hc" style="left:400px;width:89px;"></div>
<div class="hc" style="left:489px;width:88px;"></div>
<div class="hc" style="left:577px;width:92px;"></div>
<div class="hc" style="left:669px;width:92px;"></div>
<div class="hc" style="left:761px;width:92px;"></div>
<div class="hc" style="left:853px;width:92px;"></div>
<div class="hc" style="left:945px;width:92px;"></div>
<div class="hc" style="left:1037px;width:93px;"></div>
</div>
<div class="grow" style="top:21px"><div class="sel"></div><svg class="pm" width="11" height="11" viewBox="0 0 11 11"><rect x="0" y="0" width="11" height="11" fill="#d6d6d6"/><path d="M0.5 11 V0.5 H11" stroke="#ffffff" fill="none"/><path d="M0.5 10.5 H10.5 V0.5" stroke="#a2a2a2" fill="none"/><path d="M3 5.5 H8 M5.5 3 V8" stroke="#111" stroke-width="1" fill="none"/></svg><span class="gl">Inspect</span></div>
<div class="grow" style="top:40px"><div class="sel"></div><svg class="pm" width="11" height="11" viewBox="0 0 11 11"><rect x="0" y="0" width="11" height="11" fill="#d6d6d6"/><path d="M0.5 11 V0.5 H11" stroke="#ffffff" fill="none"/><path d="M0.5 10.5 H10.5 V0.5" stroke="#a2a2a2" fill="none"/><path d="M3 5.5 H8" stroke="#111" stroke-width="1" fill="none"/></svg><span class="gl">Inspection</span></div>
<div class="drow" style="top:59px"><div class="sel"></div><div class="cells"><div class="c r" style="left:0px;width:96px;padding-right:1.5px;transform:scaleY(1.12);">81585</div><div class="c r" style="left:96px;width:92px;padding-right:1.5px;transform:scaleY(1.12);">1</div><div class="c l" style="left:188px;width:90px;transform:scaleY(1.12);">96</div><div class="c l" style="left:278px;width:90px;font-size:11.5px;transform:scaleY(1.06);">81585-1-A31-...</div><div class="c l" style="left:368px;width:89px;font-size:12px;letter-spacing:-0.1px;">Inspection</div><div class="c r" style="left:457px;width:88px;transform:scaleY(1.12);">56</div><div class="c r" style="left:545px;width:92px;transform:scaleY(1.12);">5</div><div class="c r" style="left:637px;width:92px;transform:scaleY(1.12);">8</div><div class="c r" style="left:729px;width:92px;"></div><div class="c r" style="left:821px;width:92px;transform:scaleY(1.12);">2</div><div class="c r" style="left:913px;width:92px;"></div><div class="c r" style="left:1005px;width:93px;letter-spacing:-0.2px;transform:scaleY(1.12);">$450.00</div></div></div>
<div class="drow alt" style="top:78px"><div class="sel"></div><div class="cells"><div class="c r" style="left:0px;width:96px;padding-right:1.5px;transform:scaleY(1.12);">81585</div><div class="c r" style="left:96px;width:92px;padding-right:1.5px;transform:scaleY(1.12);">1</div><div class="c l" style="left:188px;width:90px;transform:scaleY(1.12);">97</div><div class="c l" style="left:278px;width:90px;font-size:11.5px;transform:scaleY(1.06);">81585-1-A31-...</div><div class="c l" style="left:368px;width:89px;font-size:12px;letter-spacing:-0.1px;">Inspection</div><div class="c r" style="left:457px;width:88px;transform:scaleY(1.12);">24</div><div class="c r" style="left:545px;width:92px;transform:scaleY(1.12);">4</div><div class="c r" style="left:637px;width:92px;transform:scaleY(1.12);">6</div><div class="c r" style="left:729px;width:92px;font-size:11.5px;transform:scaleY(1.06);">7/01/18</div><div class="c r" style="left:821px;width:92px;transform:scaleY(1.12);">0</div><div class="c r" style="left:913px;width:92px;"></div><div class="c r" style="left:1005px;width:93px;letter-spacing:-0.2px;transform:scaleY(1.12);">$360.00</div></div></div>
<div class="drow" style="top:97px"><div class="sel"></div><div class="cells"><div class="c r" style="left:0px;width:96px;padding-right:1.5px;transform:scaleY(1.12);">81585</div><div class="c r" style="left:96px;width:92px;padding-right:1.5px;transform:scaleY(1.12);">1</div><div class="c l" style="left:188px;width:90px;transform:scaleY(1.12);">98</div><div class="c l" style="left:278px;width:90px;font-size:11.5px;transform:scaleY(1.06);">81585-1-A31-...</div><div class="c l" style="left:368px;width:89px;font-size:12px;letter-spacing:-0.1px;">Inspection</div><div class="c r" style="left:457px;width:88px;transform:scaleY(1.12);">176</div><div class="c r" style="left:545px;width:92px;transform:scaleY(1.12);">0</div><div class="c r" style="left:637px;width:92px;transform:scaleY(1.12);">8</div><div class="c r" style="left:729px;width:92px;font-size:11.5px;transform:scaleY(1.06);">6/26/18</div><div class="c r" style="left:821px;width:92px;transform:scaleY(1.12);">0</div><div class="c r" style="left:913px;width:92px;"></div><div class="c r" style="left:1005px;width:93px;letter-spacing:-0.2px;transform:scaleY(1.12);">$0.00</div></div></div>
<div class="drow alt" style="top:116px"><div class="sel"></div><div class="cells"><div class="c r" style="left:0px;width:96px;padding-right:1.5px;transform:scaleY(1.12);">81585</div><div class="c r" style="left:96px;width:92px;padding-right:1.5px;transform:scaleY(1.12);">1</div><div class="c l" style="left:188px;width:90px;transform:scaleY(1.12);">99</div><div class="c l" style="left:278px;width:90px;font-size:11.5px;transform:scaleY(1.06);">81585-1-A32-...</div><div class="c l" style="left:368px;width:89px;font-size:12px;letter-spacing:-0.1px;">Inspection</div><div class="c r" style="left:457px;width:88px;transform:scaleY(1.12);">12</div><div class="c r" style="left:545px;width:92px;transform:scaleY(1.12);">18</div><div class="c r" style="left:637px;width:92px;transform:scaleY(1.12);">2</div><div class="c r" style="left:729px;width:92px;"></div><div class="c r" style="left:821px;width:92px;transform:scaleY(1.12);">0</div><div class="c r" style="left:913px;width:92px;"></div><div class="c r" style="left:1005px;width:93px;letter-spacing:-0.2px;transform:scaleY(1.12);">$1,620.00</div></div></div>
<div class="trow" style="top:135px"><div class="sel"></div><span class="tt" style="right:554px">Total: 268</span><span class="tt" style="right:462px">Total: 27</span></div>
<div class="grow" style="top:154px"><div class="sel"></div><svg class="pm" width="11" height="11" viewBox="0 0 11 11"><rect x="0" y="0" width="11" height="11" fill="#d6d6d6"/><path d="M0.5 11 V0.5 H11" stroke="#ffffff" fill="none"/><path d="M0.5 10.5 H10.5 V0.5" stroke="#a2a2a2" fill="none"/><path d="M3 5.5 H8 M5.5 3 V8" stroke="#111" stroke-width="1" fill="none"/></svg><span class="gl">Machining</span></div>
<div class="grow" style="top:173px"><div class="sel"></div><svg class="pm" width="11" height="11" viewBox="0 0 11 11"><rect x="0" y="0" width="11" height="11" fill="#d6d6d6"/><path d="M0.5 11 V0.5 H11" stroke="#ffffff" fill="none"/><path d="M0.5 10.5 H10.5 V0.5" stroke="#a2a2a2" fill="none"/><path d="M3 5.5 H8" stroke="#111" stroke-width="1" fill="none"/></svg><span class="gl">Painting</span></div>
<div class="drow alt" style="top:192px"><div class="sel"></div><div class="cells"><div class="c r" style="left:0px;width:96px;padding-right:1.5px;transform:scaleY(1.12);">81585</div><div class="c r" style="left:96px;width:92px;padding-right:1.5px;transform:scaleY(1.12);">1</div><div class="c l" style="left:188px;width:90px;transform:scaleY(1.12);">12</div><div class="c l" style="left:278px;width:90px;font-size:11.5px;transform:scaleY(1.06);">81585-1-A31-...</div><div class="c l" style="left:368px;width:89px;font-size:12px;letter-spacing:-0.1px;">Painting</div><div class="c r" style="left:457px;width:88px;transform:scaleY(1.12);">0</div><div class="c r" style="left:545px;width:92px;transform:scaleY(1.12);">0</div><div class="c r" style="left:637px;width:92px;transform:scaleY(1.12);">2</div><div class="c r" style="left:729px;width:92px;font-size:11.5px;transform:scaleY(1.06);">6/26/18</div><div class="c r" style="left:821px;width:92px;transform:scaleY(1.12);">0</div><div class="c r" style="left:913px;width:92px;"></div><div class="c r" style="left:1005px;width:93px;letter-spacing:-0.2px;transform:scaleY(1.12);">$0.00</div></div></div>
<div class="drow" style="top:211px"><div class="sel"></div><div class="cells"><div class="c r" style="left:0px;width:96px;padding-right:1.5px;transform:scaleY(1.12);">81585</div><div class="c r" style="left:96px;width:92px;padding-right:1.5px;transform:scaleY(1.12);">1</div><div class="c l" style="left:188px;width:90px;transform:scaleY(1.12);">24</div><div class="c l" style="left:278px;width:90px;font-size:11.5px;transform:scaleY(1.06);">sw-1234</div><div class="c l" style="left:368px;width:89px;font-size:12px;letter-spacing:-0.1px;">Painting</div><div class="c r" style="left:457px;width:88px;transform:scaleY(1.12);">2</div><div class="c r" style="left:545px;width:92px;transform:scaleY(1.12);">0</div><div class="c r" style="left:637px;width:92px;transform:scaleY(1.12);">1</div><div class="c r" style="left:729px;width:92px;font-size:11.5px;transform:scaleY(1.06);">4/01/12</div><div class="c r" style="left:821px;width:92px;transform:scaleY(1.12);">0</div><div class="c r" style="left:913px;width:92px;"></div><div class="c r" style="left:1005px;width:93px;letter-spacing:-0.2px;transform:scaleY(1.12);">$0.00</div></div></div>
<div class="drow alt" style="top:230px"><div class="sel"></div><div class="cells"><div class="c r" style="left:0px;width:96px;padding-right:1.5px;transform:scaleY(1.12);">81585</div><div class="c r" style="left:96px;width:92px;padding-right:1.5px;transform:scaleY(1.12);">1</div><div class="c l" style="left:188px;width:90px;transform:scaleY(1.12);">25</div><div class="c l" style="left:278px;width:90px;font-size:11.5px;transform:scaleY(1.06);">31-107-994-93</div><div class="c l" style="left:368px;width:89px;font-size:12px;letter-spacing:-0.1px;">Painting</div><div class="c r" style="left:457px;width:88px;transform:scaleY(1.12);">0</div><div class="c r" style="left:545px;width:92px;transform:scaleY(1.12);">14</div><div class="c r" style="left:637px;width:92px;transform:scaleY(1.12);">1</div><div class="c r" style="left:729px;width:92px;"></div><div class="c r" style="left:821px;width:92px;transform:scaleY(1.12);">0</div><div class="c r" style="left:913px;width:92px;"></div><div class="c r" style="left:1005px;width:93px;letter-spacing:-0.2px;transform:scaleY(1.12);">$910.00</div></div></div>
<div class="drow" style="top:249px"><div class="sel"></div><div class="cells"><div class="c r" style="left:0px;width:96px;padding-right:1.5px;transform:scaleY(1.12);">81585</div><div class="c r" style="left:96px;width:92px;padding-right:1.5px;transform:scaleY(1.12);">1</div><div class="c l" style="left:188px;width:90px;transform:scaleY(1.12);">29</div><div class="c l" style="left:278px;width:90px;font-size:11.5px;transform:scaleY(1.06);">80054-1-050-0...</div><div class="c l" style="left:368px;width:89px;font-size:12px;letter-spacing:-0.1px;">Painting</div><div class="c r" style="left:457px;width:88px;transform:scaleY(1.12);">2</div><div class="c r" style="left:545px;width:92px;transform:scaleY(1.12);">12</div><div class="c r" style="left:637px;width:92px;transform:scaleY(1.12);">1</div><div class="c r" style="left:729px;width:92px;font-size:11.5px;transform:scaleY(1.06);">6/01/18</div><div class="c r" style="left:821px;width:92px;transform:scaleY(1.12);">0</div><div class="c r" style="left:913px;width:92px;"></div><div class="c r" style="left:1005px;width:93px;letter-spacing:-0.2px;transform:scaleY(1.12);">$780.00</div></div></div>
<div class="drow alt" style="top:268px"><div class="sel"></div><div class="cells"><div class="c r" style="left:0px;width:96px;padding-right:1.5px;transform:scaleY(1.12);">84151</div><div class="c r" style="left:96px;width:92px;padding-right:1.5px;transform:scaleY(1.12);">1</div><div class="c l" style="left:188px;width:90px;transform:scaleY(1.12);">30</div><div class="c l" style="left:278px;width:90px;font-size:11.5px;transform:scaleY(1.06);">31-107-994-93</div><div class="c l" style="left:368px;width:89px;font-size:12px;letter-spacing:-0.1px;">Painting</div><div class="c r" style="left:457px;width:88px;transform:scaleY(1.12);">0</div><div class="c r" style="left:545px;width:92px;transform:scaleY(1.12);">0</div><div class="c r" style="left:637px;width:92px;transform:scaleY(1.12);">1</div><div class="c r" style="left:729px;width:92px;"></div><div class="c r" style="left:821px;width:92px;transform:scaleY(1.12);">0</div><div class="c r" style="left:913px;width:92px;"></div><div class="c r" style="left:1005px;width:93px;letter-spacing:-0.2px;transform:scaleY(1.12);">$0.00</div></div></div>
<div class="drow" style="top:287px"><div class="sel"></div><div class="cells"><div class="c r" style="left:0px;width:96px;padding-right:1.5px;transform:scaleY(1.12);">12338</div><div class="c r" style="left:96px;width:92px;padding-right:1.5px;transform:scaleY(1.12);">1</div><div class="c l" style="left:188px;width:90px;transform:scaleY(1.12);">44</div><div class="c l" style="left:278px;width:90px;font-size:11.5px;transform:scaleY(1.06);">123</div><div class="c l" style="left:368px;width:89px;font-size:12px;letter-spacing:-0.1px;">Painting</div><div class="c r" style="left:457px;width:88px;transform:scaleY(1.12);">16</div><div class="c r" style="left:545px;width:92px;transform:scaleY(1.12);">7</div><div class="c r" style="left:637px;width:92px;transform:scaleY(1.12);">4</div><div class="c r" style="left:729px;width:92px;font-size:11.5px;transform:scaleY(1.06);">6/03/18</div><div class="c r" style="left:821px;width:92px;transform:scaleY(1.12);">0</div><div class="c r" style="left:913px;width:92px;"></div><div class="c r" style="left:1005px;width:93px;letter-spacing:-0.2px;transform:scaleY(1.12);">$455.00</div></div></div>
<div class="trow" style="top:306px"><div class="sel"></div><span class="tt" style="right:554px">Total: 20</span><span class="tt" style="right:462px">Total: 33</span></div>
<div class="grow" style="top:325px"><div class="sel"></div><svg class="pm" width="11" height="11" viewBox="0 0 11 11"><rect x="0" y="0" width="11" height="11" fill="#d6d6d6"/><path d="M0.5 11 V0.5 H11" stroke="#ffffff" fill="none"/><path d="M0.5 10.5 H10.5 V0.5" stroke="#a2a2a2" fill="none"/><path d="M3 5.5 H8 M5.5 3 V8" stroke="#111" stroke-width="1" fill="none"/></svg><span class="gl">Subcontract</span></div>
<div class="grow" style="top:344px"><div class="sel"></div><svg class="pm" width="11" height="11" viewBox="0 0 11 11"><rect x="0" y="0" width="11" height="11" fill="#d6d6d6"/><path d="M0.5 11 V0.5 H11" stroke="#ffffff" fill="none"/><path d="M0.5 10.5 H10.5 V0.5" stroke="#a2a2a2" fill="none"/><path d="M3 5.5 H8" stroke="#111" stroke-width="1" fill="none"/></svg><span class="gl">Welding</span></div>
<div class="drow" style="top:363px"><div class="sel"></div><div class="cells"><div class="c r" style="left:0px;width:96px;padding-right:1.5px;transform:scaleY(1.12);">81585</div><div class="c r" style="left:96px;width:92px;padding-right:1.5px;transform:scaleY(1.12);">1</div><div class="c l" style="left:188px;width:90px;transform:scaleY(1.12);">12</div><div class="c l" style="left:278px;width:90px;font-size:11.5px;transform:scaleY(1.06);">81585-1-A31-...</div><div class="c l" style="left:368px;width:89px;font-size:12px;letter-spacing:-0.1px;">Welding</div><div class="c r" style="left:457px;width:88px;transform:scaleY(1.12);">0</div><div class="c r" style="left:545px;width:92px;transform:scaleY(1.12);">0</div><div class="c r" style="left:637px;width:92px;transform:scaleY(1.12);">3</div><div class="c r" style="left:729px;width:92px;"></div><div class="c r" style="left:821px;width:92px;transform:scaleY(1.12);">2</div><div class="c r" style="left:913px;width:92px;"></div><div class="c r" style="left:1005px;width:93px;letter-spacing:-0.2px;transform:scaleY(1.12);">$0.00</div></div></div>
<div class="drow alt" style="top:382px"><div class="sel"></div><div class="cells"><div class="c r" style="left:0px;width:96px;padding-right:1.5px;transform:scaleY(1.12);">1</div><div class="c r" style="left:96px;width:92px;padding-right:1.5px;transform:scaleY(1.12);">1</div><div class="c l" style="left:188px;width:90px;transform:scaleY(1.12);">13</div><div class="c l" style="left:278px;width:90px;font-size:11.5px;transform:scaleY(1.06);">123</div><div class="c l" style="left:368px;width:89px;font-size:12px;letter-spacing:-0.1px;">Welding</div><div class="c r" style="left:457px;width:88px;transform:scaleY(1.12);">0</div><div class="c r" style="left:545px;width:92px;transform:scaleY(1.12);">0</div><div class="c r" style="left:637px;width:92px;transform:scaleY(1.12);">5</div><div class="c r" style="left:729px;width:92px;"></div><div class="c r" style="left:821px;width:92px;transform:scaleY(1.12);">3</div><div class="c r" style="left:913px;width:92px;"></div><div class="c r" style="left:1005px;width:93px;letter-spacing:-0.2px;transform:scaleY(1.12);">$0.00</div></div></div>
<div class="drow" style="top:401px"><div class="sel"></div><div class="cells"><div class="c r" style="left:0px;width:96px;padding-right:1.5px;transform:scaleY(1.12);">1</div><div class="c r" style="left:96px;width:92px;padding-right:1.5px;transform:scaleY(1.12);">1</div><div class="c l" style="left:188px;width:90px;transform:scaleY(1.12);">14</div><div class="c l" style="left:278px;width:90px;font-size:11.5px;transform:scaleY(1.06);">123</div><div class="c l" style="left:368px;width:89px;font-size:12px;letter-spacing:-0.1px;">Welding</div><div class="c r" style="left:457px;width:88px;transform:scaleY(1.12);">96</div><div class="c r" style="left:545px;width:92px;transform:scaleY(1.12);">5</div><div class="c r" style="left:637px;width:92px;transform:scaleY(1.12);">12</div><div class="c r" style="left:729px;width:92px;"></div><div class="c r" style="left:821px;width:92px;transform:scaleY(1.12);">6</div><div class="c r" style="left:913px;width:92px;"></div><div class="c r" style="left:1005px;width:93px;letter-spacing:-0.2px;transform:scaleY(1.12);">$275.00</div></div></div>
<div class="drow alt" style="top:420px"><div class="sel"></div><div class="cells"><div class="c r" style="left:0px;width:96px;padding-right:1.5px;transform:scaleY(1.12);">456</div><div class="c r" style="left:96px;width:92px;padding-right:1.5px;transform:scaleY(1.12);">1</div><div class="c l" style="left:188px;width:90px;transform:scaleY(1.12);">16</div><div class="c l" style="left:278px;width:90px;font-size:11.5px;transform:scaleY(1.06);">63273-40-22</div><div class="c l" style="left:368px;width:89px;font-size:12px;letter-spacing:-0.1px;">Welding</div><div class="c r" style="left:457px;width:88px;transform:scaleY(1.12);">0</div><div class="c r" style="left:545px;width:92px;transform:scaleY(1.12);">0</div><div class="c r" style="left:637px;width:92px;transform:scaleY(1.12);">36</div><div class="c r" style="left:729px;width:92px;"></div><div class="c r" style="left:821px;width:92px;transform:scaleY(1.12);">18</div><div class="c r" style="left:913px;width:92px;"></div><div class="c r" style="left:1005px;width:93px;letter-spacing:-0.2px;transform:scaleY(1.12);">$0.00</div></div></div>
</div>
<div class="t" style="left:56.9px;top:230.7px;font-size:11.5px;color:#1a1a1a;-webkit-text-stroke:0.08px;letter-spacing:0.24px;">Project</div>
<div class="t" style="left:152.4px;top:230.7px;font-size:11.5px;color:#1a1a1a;-webkit-text-stroke:0.08px;letter-spacing:0.05px;">Job</div>
<div class="t" style="left:244.7px;top:230.7px;font-size:11px;color:#1a1a1a;-webkit-text-stroke:0.08px;letter-spacing:0.09px;">PS #</div>
<div class="t" style="left:334.8px;top:230.7px;font-size:11.5px;color:#1a1a1a;-webkit-text-stroke:0.08px;letter-spacing:0.16px;">Part No</div>
<div class="t" style="left:424.8px;top:230.7px;font-size:11px;color:#1a1a1a;-webkit-text-stroke:0.08px;letter-spacing:0.05px;">Process</div>
<div class="t" style="left:513.8px;top:230.7px;font-size:11px;color:#1a1a1a;-webkit-text-stroke:0.08px;letter-spacing:0.06px;">Extended Est ...</div>
<div class="t" style="left:602.1px;top:230.7px;font-size:11.5px;color:#1a1a1a;-webkit-text-stroke:0.08px;letter-spacing:0.27px;">Actual Hours</div>
<div class="t" style="left:694.1px;top:230.7px;font-size:11.5px;color:#1a1a1a;-webkit-text-stroke:0.08px;letter-spacing:0.13px;">Required Qty</div>
<div class="t" style="left:786.1px;top:230.7px;font-size:11.5px;color:#1a1a1a;-webkit-text-stroke:0.08px;">Required Date</div>
<div class="t" style="left:877.5px;top:230.7px;font-size:11.5px;color:#1a1a1a;-webkit-text-stroke:0.08px;letter-spacing:0.13px;">Prev Complete...</div>
<div class="t" style="left:969.7px;top:230.7px;font-size:11.5px;color:#1a1a1a;-webkit-text-stroke:0.08px;letter-spacing:0.18px;">Curr Complete...</div>
<div class="t" style="left:1062.0px;top:230.7px;font-size:11.5px;color:#1a1a1a;-webkit-text-stroke:0.08px;letter-spacing:0.1px;">Total Costs</div>
<svg class="abs" style="left:272px;top:233px" width="9" height="8" viewBox="0 0 9 8"><path d="M4.5 0.8 L8.3 7.4 L0.7 7.4 Z" fill="#dedede" stroke="#f4f4f4" stroke-width="0.9"/></svg>
<svg class="abs" style="left:468.4px;top:233px" width="9" height="8" viewBox="0 0 9 8"><path d="M4.5 0.8 L8.3 7.4 L0.7 7.4 Z" fill="#dedede" stroke="#f4f4f4" stroke-width="0.9"/></svg>
<div class="abs" style="left:22px;top:658px;width:1147px;height:17px;background:#f0f0f0"></div><div class="abs" style="left:22px;top:706px;width:1147px;height:17px;background:#f4f4f4"></div>
<div class="t" style="left:25.0px;top:658.5px;font-size:11.5px;color:#1a1a1a;-webkit-text-stroke:0.1px;letter-spacing:-0.11px;">Record:</div>
<div class="t" style="left:159.3px;top:658.5px;font-size:11.5px;color:#1a1a1a;-webkit-text-stroke:0.1px;">of 34</div>
<div class="t" style="left:579.5px;top:680.5px;font-size:12px;color:#a3a3a3;-webkit-text-stroke:0;letter-spacing:-0.11px;">Total Est. Hours</div>
<div class="t" style="left:794.2px;top:680.5px;font-size:12.5px;color:#a3a3a3;-webkit-text-stroke:0;letter-spacing:-0.09px;">Total Actual Hours</div>
<div class="navb" style="left:69px;width:17.5px"><svg width="15.5" height="15" viewBox="0 0 15.5 15"><path d="M4 3 V12" stroke="#000" stroke-width="1.6"/><path d="M11 3 V12 L6 7.5 Z" fill="#000"/></svg></div>
<div class="navb" style="left:86.5px;width:18px"><svg width="16" height="15" viewBox="0 0 16 15"><path d="M10.5 3 V12 L5.5 7.5 Z" fill="#000"/></svg></div>
<div class="abs" style="left:109.5px;top:658.5px;width:44.5px;height:16.5px;background:#fff;border-top:2px solid #8a8a8a;border-left:2px solid #8a8a8a;text-align:right;padding-right:4px;line-height:13px;font-size:11px">31</div>
<div class="navb" style="left:193px;width:17.5px"><svg width="15.5" height="15" viewBox="0 0 15.5 15"><path d="M5.5 3 V12 L10.5 7.5 Z" fill="#000"/></svg></div>
<div class="navb" style="left:210.5px;width:18px"><svg width="16" height="15" viewBox="0 0 16 15"><path d="M4 3 V12 L9 7.5 Z" fill="#000"/><path d="M11 3 V12" stroke="#000" stroke-width="1.6"/></svg></div>
<div class="fld" style="left:671px;width:114px">2216</div>
<div class="fld" style="left:901px;width:106px">123</div>
<div class="btn" style="left:1014px;width:71px"><span>C<u>o</u>mplete</span></div>
<div class="btn" style="left:1093px;width:71px"><span style="letter-spacing:-0.25px"><u>C</u>ancel</span></div>
<div class="abs" style="left:1152px;top:227px;width:17px;height:431px;background:linear-gradient(#f7f7f7 0,#f7f7f7 17px,#f0f0f0 17px)"></div><div class="abs" style="left:1153px;top:244px;width:15px;height:208px;background:#cdcdcd"></div>
<svg class="abs" style="left:1156px;top:233px" width="9" height="6" viewBox="0 0 9 6"><path d="M0.7 5.2 L4.5 1.2 L8.3 5.2" fill="none" stroke="#404040" stroke-width="1.9"/></svg>
<svg class="abs" style="left:1156px;top:646px" width="9" height="6" viewBox="0 0 9 6"><path d="M0.7 0.8 L4.5 4.8 L8.3 0.8" fill="none" stroke="#404040" stroke-width="1.9"/></svg>
<div class="abs" id="topline"></div>
<div class="abs" id="leftline"></div>
<div class="abs" id="rightstrip"></div>
<div class="abs" id="rightline"></div>
</body></html>
